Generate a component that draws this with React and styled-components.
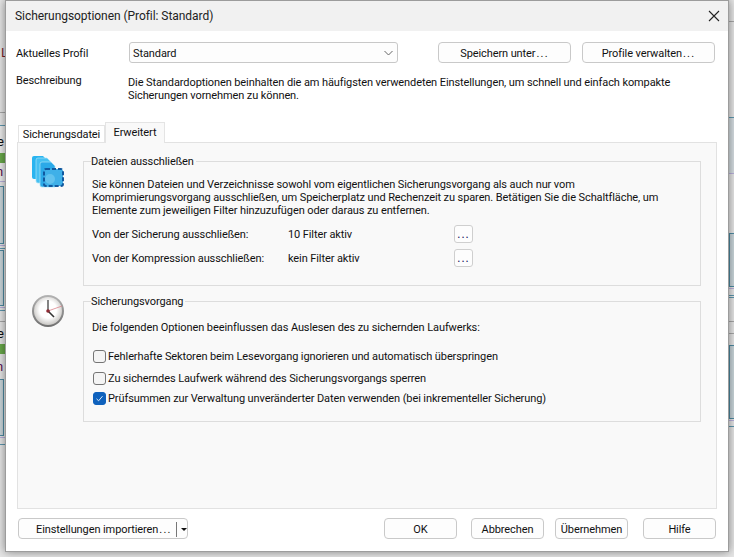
import React from 'react';
import styled, { createGlobalStyle } from 'styled-components';

const Global = createGlobalStyle`
    html, body { margin: 0; padding: 0; background: #e4e4e4; }
    * { box-sizing: border-box; }
`;

const font = `Roboto, "Open Sans", "Liberation Sans", sans-serif`;

const Desktop = styled.div`
    position: relative;
    width: 734px;
    height: 557px;
    overflow: hidden;
    background: #e6e6e6;
    font-family: ${font};
    font-size: 11px;
    letter-spacing: -0.1px;
    color: #111;
`;

// restes de la fenêtre derrière le dialogue
const Mark = styled.div`
    position: absolute;
    left: ${p => p.$left}px;
    top: ${p => p.$top}px;
    width: ${p => p.$width}px;
    height: ${p => p.$height}px;
    background: ${p => p.$color};
`;

const BoxMark = styled.div`
    position: absolute;
    left: ${p => p.$left}px;
    top: ${p => p.$top}px;
    width: ${p => p.$width}px;
    height: ${p => p.$height}px;
    background: #c9d5da;
    border: 1px solid #4e8ba3;
`;

const Glyph = styled.span`
    position: absolute;
    left: ${p => p.$left}px;
    top: ${p => p.$top}px;
    font-size: 13px;
    line-height: 14px;
    color: ${p => p.$color};
`;

const Dialog = styled.div`
    position: absolute;
    left: 5px;
    top: 0;
    width: 724px;
    height: 552px;
    display: flex;
    flex-direction: column;
    background: #fff;
    border: 1px solid #9c9c9c;
    box-shadow: 0 0 9px rgba(0, 0, 0, 0.45);
`;

const TitleBar = styled.div`
    height: 30px;
    flex: none;
    display: flex;
    align-items: center;
    justify-content: space-between;
    padding: 0 8px 0 9px;
    background: #f1f1f1;
    font-size: 12px;
    letter-spacing: -0.05px;
    color: #222;
`;

const Body = styled.div`
    flex: 1;
    display: flex;
    flex-direction: column;
    padding: 11px 11px 0 10px;
`;

const ProfileRow = styled.div`
    display: flex;
    align-items: center;
    height: 21px;
`;

const RowLabel = styled.div`
    width: 113px;
    flex: none;
    padding-top: 2px;
`;

const Select = styled.div`
    width: 269px;
    height: 21px;
    margin-right: 40px;
    display: flex;
    align-items: center;
    justify-content: space-between;
    padding: 1px 4px 0 3px;
    background: #fdfdfd;
    border: 1px solid #c8c8c8;
    border-radius: 3px;
`;

const Button = styled.div`
    width: ${p => p.$width || 73}px;
    height: 21px;
    display: flex;
    align-items: center;
    justify-content: center;
    padding-top: 1px;
    background: #fdfdfd;
    border: 1px solid #c9c9c9;
    border-radius: 4px;
    margin-left: ${p => p.$gap || 0}px;
`;

const Ellipsis = styled.span`
    letter-spacing: 1.2px;
    margin-left: 1px;
`;

const DescRow = styled.div`
    display: flex;
    margin-top: 11px;
    height: 49px;
`;

const DescLabel = styled.div`
    width: 112px;
    flex: none;
    line-height: 13px;
`;

const DescText = styled.div`
    line-height: 13px;
    padding-top: 2px;
    white-space: pre;
`;

const Tabs = styled.div`
    display: flex;
    align-items: flex-end;
    height: 20px;
    margin-left: 2px;
    position: relative;
    z-index: 1;
    margin-bottom: -1px;
`;

const Tab = styled.div`
    height: ${p => (p.$active ? 21 : 18)}px;
    width: ${p => (p.$active ? 60 : 87)}px;
    display: flex;
    align-items: center;
    justify-content: center;
    background: ${p => (p.$active ? '#f9f9f9' : '#fff')};
    border: 1px solid #e4e4e4;
    border-bottom: ${p => (p.$active ? 'none' : '1px solid #e4e4e4')};
    padding-bottom: ${p => (p.$active ? 1 : 0)}px;
`;

const Panel = styled.div`
    width: 700px;
    height: 367px;
    margin-left: 1px;
    padding: 12px 15px 0 14px;
    background: #f9f9f9;
    border: 1px solid #e2e2e2;
    display: flex;
    flex-direction: column;
    gap: 8px;
`;

const Section = styled.div`
    display: flex;
`;

const SectionIcon = styled.div`
    width: 51px;
    flex: none;
`;

const Group = styled.fieldset`
    width: 618px;
    height: ${p => p.$height}px;
    margin: ${p => p.$top}px 0 0 0;
    padding: 0 8px;
    border: 1px solid #dddddd;
    min-width: 0;
`;

const Legend = styled.legend`
    padding: 0 2px 0 0;
    margin-left: -1px;
    line-height: 13px;
`;

const Paragraph = styled.div`
    line-height: 13px;
    white-space: pre;
    margin-top: ${p => p.$top}px;
`;

const FilterRow = styled.div`
    display: flex;
    align-items: center;
    height: 18px;
    margin-top: ${p => p.$top}px;
`;

const FilterLabel = styled.div`
    width: 196px;
`;

const FilterValue = styled.div`
    width: 166px;
`;

const DotsButton = styled.div`
    width: 19px;
    height: 18px;
    display: flex;
    align-items: center;
    justify-content: center;
    background: #fdfdfd;
    border: 1px solid #cfcfcf;
    border-radius: 3px;
    color: #101060;
    font-size: 12px;
    letter-spacing: 1px;
`;

const CheckRow = styled.div`
    display: flex;
    align-items: center;
    gap: 2px;
    height: 14px;
    margin-top: ${p => p.$top}px;
`;

const CheckBox = styled.div`
    width: 13px;
    height: 13px;
    flex: none;
    margin-left: 1px;
    display: flex;
    align-items: center;
    justify-content: center;
    background: ${p => (p.$checked ? '#0f62bd' : '#f4f4f4')};
    border: 1px solid ${p => (p.$checked ? '#0f62bd' : '#757575')};
    border-radius: 3px;
`;

const Footer = styled.div`
    display: flex;
    align-items: center;
    margin-top: 9px;
    margin-left: 2px;
`;

const SplitButton = styled.div`
    width: 170px;
    height: 21px;
    display: flex;
    align-items: center;
    background: #fdfdfd;
    border: 1px solid #c9c9c9;
    border-radius: 4px;
    padding: 1px 0 0 17px;
    margin-right: 196px;
`;

const SplitText = styled.div`
    width: 140px;
    flex: none;
    white-space: nowrap;
`;

const SplitDivider = styled.div`
    width: 1px;
    height: 15px;
    flex: none;
    background: #777;
`;

const SplitArrow = styled.div`
    width: 0;
    height: 0;
    margin-left: 4px;
    border-left: 3px solid transparent;
    border-right: 3px solid transparent;
    border-top: 3px solid #111;
`;

const leftLines = [
    [112, '#a8a8a8'], [125, '#5d97ae'], [150, '#b9b9cf'], [181, '#b9b0dc'],
    [245, '#b9b0dc'], [248, '#5d97ae'], [307, '#b9b0dc'], [310, '#5d97ae'],
    [321, '#a8a8a8'], [437, '#b9b0dc'], [444, '#5d97ae'],
];

const rightLines = [
    [21, '#a8a8a8'], [117, '#5d97ae'], [141, '#a8a8a8'], [153, '#a8a8a8'], [173, '#b9b0dc'],
    [288, '#b9b0dc'], [295, '#5d97ae'], [297, '#5d97ae'], [321, '#a8a8a8'], [333, '#a8a8a8'],
    [353, '#b9b0dc'], [420, '#b9b0dc'], [426, '#5d97ae'],
];

const Backdrop = () => (
    <>
        {leftLines.map(([top, color]) => (
            <Mark key={top} $left={0} $top={top} $width={5} $height={1} $color={color} />
        ))}
        {rightLines.map(([top, color]) => (
            <Mark key={top} $left={729} $top={top} $width={5} $height={1} $color={color} />
        ))}
        <Mark $left={729} $top={118} $width={5} $height={55} $color="#d5dde1" />
        <Mark $left={0} $top={126} $width={5} $height={55} $color="#ececec" />
        <Mark $left={0} $top={153} $width={5} $height={10} $color="#69a94b" />
        <Mark $left={0} $top={344} $width={5} $height={10} $color="#69a94b" />
        <BoxMark $left={-4} $top={186} $width={8} $height={58} />
        <BoxMark $left={-4} $top={250} $width={8} $height={56} />
        <BoxMark $left={-4} $top={379} $width={8} $height={57} />
        <BoxMark $left={729} $top={233} $width={9} $height={54} />
        <BoxMark $left={729} $top={345} $width={9} $height={74} />
        <Glyph $left={1} $top={46} $color="#7a1f2a">L</Glyph>
        <Glyph $left={-3} $top={135} $color="#111">e</Glyph>
        <Glyph $left={-3} $top={327} $color="#111">e</Glyph>
        <Glyph $left={-4} $top={165} $color="#5c1050">n</Glyph>
        <Glyph $left={-4} $top={360} $color="#5c1050">n</Glyph>
    </>
);

const CloseIcon = () => (
    <svg width="12" height="12" viewBox="0 0 12 12">
        <path d="M1 1 L11 11 M11 1 L1 11" stroke="#222" strokeWidth="1.1" fill="none" />
    </svg>
);

const Chevron = () => (
    <svg width="9" height="6" viewBox="0 0 9 6">
        <path d="M0.5 1 L4.5 5 L8.5 1" stroke="#666" strokeWidth="1" fill="none" />
    </svg>
);

const CheckMark = () => (
    <svg width="9" height="9" viewBox="0 0 9 9">
        <path d="M1.5 4.8 L3.6 6.8 L7.5 2.2" stroke="#dbe9f8" strokeWidth="1" fill="none" />
    </svg>
);

const FilesIcon = () => (
    <svg width="34" height="34" viewBox="0 0 34 34">
        <path d="M0 3 Q0 1 2 1 H11 L15 5 V24 H2 Q0 24 0 22 Z" fill="#29b4f0" />
        <path d="M4 5 Q4 3 6 3 H15 L19 7 V28 H6 Q4 28 4 26 Z" fill="#45c0f2" stroke="#a8e2f8" strokeWidth="0.7" />
        <path d="M8 9 Q8 7 10 7 H19 L23 11 V32 H10 Q8 32 8 30 Z" fill="#2ba9e8" stroke="#a8e2f8" strokeWidth="0.7" />
        <rect x="12" y="14" width="19" height="17" rx="2" fill="#3fb0e8" />
        <circle cx="18" cy="24" r="5" fill="#62c2ee" />
        <rect x="12" y="14" width="19" height="17" rx="2" fill="none" stroke="#11599f" strokeWidth="2" strokeDasharray="4 2" />
    </svg>
);

const ClockIcon = () => (
    <svg width="34" height="34" viewBox="0 0 34 34">
        <defs>
            <linearGradient id="rim" x1="0" y1="0" x2="0" y2="1">
                <stop offset="0" stopColor="#b4b4b4" />
                <stop offset="1" stopColor="#6f6f6f" />
            </linearGradient>
            <radialGradient id="face" cx="0.5" cy="0.45" r="0.55">
                <stop offset="0.55" stopColor="#ffffff" />
                <stop offset="1" stopColor="#c9c7c4" />
            </radialGradient>
        </defs>
        <circle cx="16" cy="17" r="16" fill="url(#rim)" />
        <circle cx="16" cy="17" r="14" fill="url(#face)" />
        <path d="M16 17 L30 12" stroke="#d9848c" strokeWidth="0.8" />
        <path d="M16 17 V6" stroke="#333" strokeWidth="1.2" />
        <path d="M16 17 L22 23" stroke="#333" strokeWidth="1.6" />
        <circle cx="16" cy="17" r="1.8" fill="#8e2a34" />
    </svg>
);

const App = () => (
    <Desktop>
        <Global />
        <Backdrop />
        <Dialog>
            <TitleBar>
                Sicherungsoptionen (Profil: Standard)
                <CloseIcon />
            </TitleBar>
            <Body>
                <ProfileRow>
                    <RowLabel>Aktuelles Profil</RowLabel>
                    <Select>
                        Standard
                        <Chevron />
                    </Select>
                    <Button $width={133}>Speichern unter<Ellipsis>...</Ellipsis></Button>
                    <Button $width={133} $gap={11}>Profile verwalten<Ellipsis>...</Ellipsis></Button>
                </ProfileRow>
                <DescRow>
                    <DescLabel>Beschreibung</DescLabel>
                    <DescText>{'Die Standardoptionen beinhalten die am häufigsten verwendeten Einstellungen, um schnell und einfach kompakte\nSicherungen vornehmen zu können.'}</DescText>
                </DescRow>
                <Tabs>
                    <Tab>Sicherungsdatei</Tab>
                    <Tab $active>Erweitert</Tab>
                </Tabs>
                <Panel>
                    <Section>
                        <SectionIcon><FilesIcon /></SectionIcon>
                        <Group $height={131} $top={0}>
                            <Legend>Dateien ausschließen</Legend>
                            <Paragraph $top={10}>{'Sie können Dateien und Verzeichnisse sowohl vom eigentlichen Sicherungsvorgang als auch nur vom\nKomprimierungsvorgang ausschließen, um Speicherplatz und Rechenzeit zu sparen. Betätigen Sie die Schaltfläche, um\nElemente zum jeweiligen Filter hinzuzufügen oder daraus zu entfernen.'}</Paragraph>
                            <FilterRow $top={8}>
                                <FilterLabel>Von der Sicherung ausschließen:</FilterLabel>
                                <FilterValue>10 Filter aktiv</FilterValue>
                                <DotsButton>...</DotsButton>
                            </FilterRow>
                            <FilterRow $top={6}>
                                <FilterLabel>Von der Kompression ausschließen:</FilterLabel>
                                <FilterValue>kein Filter aktiv</FilterValue>
                                <DotsButton>...</DotsButton>
                            </FilterRow>
                        </Group>
                    </Section>
                    <Section>
                        <SectionIcon><ClockIcon /></SectionIcon>
                        <Group $height={127} $top={1}>
                            <Legend>Sicherungsvorgang</Legend>
                            <Paragraph $top={13}>Die folgenden Optionen beeinflussen das Auslesen des zu sichernden Laufwerks:</Paragraph>
                            <CheckRow $top={15}><CheckBox />Fehlerhafte Sektoren beim Lesevorgang ignorieren und automatisch überspringen</CheckRow>
                            <CheckRow $top={8}><CheckBox />Zu sicherndes Laufwerk während des Sicherungsvorgangs sperren</CheckRow>
                            <CheckRow $top={6}><CheckBox $checked><CheckMark /></CheckBox>Prüfsummen zur Verwaltung unveränderter Daten verwenden (bei inkrementeller Sicherung)</CheckRow>
                        </Group>
                    </Section>
                </Panel>
                <Footer>
                    <SplitButton>
                        <SplitText>Einstellungen importieren<Ellipsis>...</Ellipsis></SplitText>
                        <SplitDivider />
                        <SplitArrow />
                    </SplitButton>
                    <Button>OK</Button>
                    <Button $gap={14}>Abbrechen</Button>
                    <Button $gap={11}>Übernehmen</Button>
                    <Button $gap={15}>Hilfe</Button>
                </Footer>
            </Body>
        </Dialog>
    </Desktop>
);

export default App;
